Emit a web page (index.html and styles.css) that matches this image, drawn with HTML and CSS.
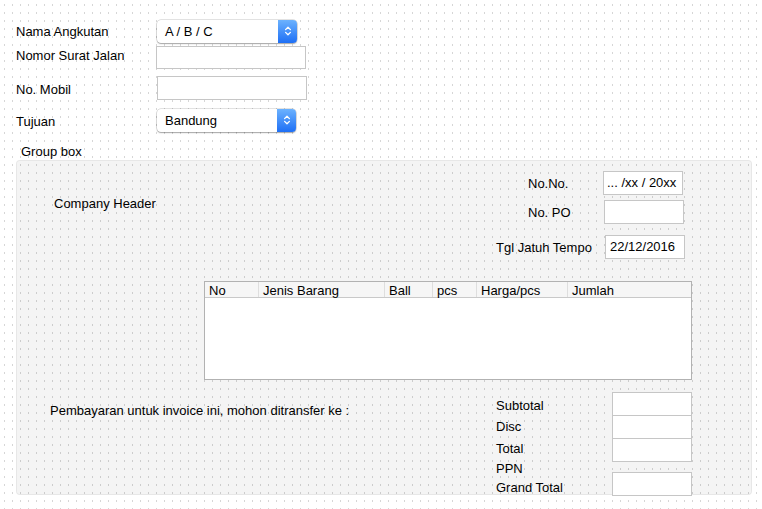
FILE: index.html
```html
<!DOCTYPE html>
<html>
<head>
<meta charset="utf-8">
<link rel="stylesheet" href="styles.css">
</head>
<body>
<div class="form">
  <div class="row r1">
    <span class="lbl">Nama Angkutan</span>
    <div class="combo c1">
      <span class="combo-text">A / B / C</span>
      <span class="combo-btn"><svg width="8" height="12" viewBox="0 0 8 12"><path d="M1.6 4.6 L4 2.2 L6.4 4.6 M1.6 7.4 L4 9.8 L6.4 7.4" fill="none" stroke="#fff" stroke-width="1.3" stroke-linecap="round" stroke-linejoin="round"/></svg></span>
    </div>
  </div>
  <div class="row r2">
    <span class="lbl">Nomor Surat Jalan</span>
    <div class="field f-long"></div>
  </div>
  <div class="row r3">
    <span class="lbl">No. Mobil</span>
    <div class="field f-long f-shift"></div>
  </div>
  <div class="row r4">
    <span class="lbl">Tujuan</span>
    <div class="combo c2">
      <span class="combo-text">Bandung</span>
      <span class="combo-btn"><svg width="8" height="12" viewBox="0 0 8 12"><path d="M1.6 4.6 L4 2.2 L6.4 4.6 M1.6 7.4 L4 9.8 L6.4 7.4" fill="none" stroke="#fff" stroke-width="1.3" stroke-linecap="round" stroke-linejoin="round"/></svg></span>
    </div>
  </div>
</div>

<div class="gb-title">Group box</div>
<div class="gb">
  <div class="gb-head">
    <div class="company">Company Header</div>
    <div class="meta">
      <div class="meta-row m1"><span class="meta-lbl">No.No.</span><div class="field f-short">... /xx / 20xx</div></div>
      <div class="meta-row m2"><span class="meta-lbl">No. PO</span><div class="field f-short"></div></div>
      <div class="meta-row m3"><span class="meta-lbl">Tgl Jatuh Tempo</span><div class="field f-short f-date">22/12/2016</div></div>
    </div>
  </div>

  <div class="table">
    <div class="thead">
      <div class="th w1">No</div>
      <div class="th w2">Jenis Barang</div>
      <div class="th w3">Ball</div>
      <div class="th w4">pcs</div>
      <div class="th w5">Harga/pcs</div>
      <div class="th w6">Jumlah</div>
    </div>
  </div>

  <div class="foot">
    <div class="pay">Pembayaran untuk invoice ini, mohon ditransfer ke :</div>
    <div class="sums">
      <div class="s1">Subtotal</div>
      <div class="s2">Disc</div>
      <div class="s3">Total</div>
      <div class="s4">PPN</div>
      <div class="s5">Grand Total</div>
    </div>
    <div class="sum-fields">
      <div class="field f-sum"></div>
      <div class="field f-sum f-join"></div>
      <div class="field f-sum f-join"></div>
      <div class="field f-sum f-grand"></div>
    </div>
  </div>
</div>
</body>
</html>
```

FILE: styles.css
```css
html, body {
  margin: 0;
  padding: 0;
}

body {
  width: 762px;
  height: 509px;
  overflow: hidden;
  font-family: "Liberation Sans", Arial, sans-serif;
  font-size: 13px;
  line-height: 15px;
  color: #000;
  background-color: #fff;
  background-image:
    linear-gradient(to bottom, #fff 0, #fff 4px, rgba(255,255,255,0) 4px, rgba(255,255,255,0) 6px, #fff 6px),
    linear-gradient(to right, rgba(214,214,214,0) 0, rgba(214,214,214,0) 4px, #d6d6d6 4px, #d6d6d6 5px, rgba(214,214,214,0) 5px);
  background-size: 8px 8px, 8px 8px;
}

.form {
  padding: 19px 0 0 16px;
}

.row {
  display: flex;
  align-items: center;
}

.lbl {
  width: 140px;
  flex: none;
}

.r1 { height: 24px; }
.r2 { height: 23px; margin-top: 3px; }
.r2 .lbl { padding-bottom: 4px; }
.r3 { height: 24px; margin-top: 7px; }
.r3 .lbl { padding-top: 2px; }
.r4 { height: 24px; margin-top: 8px; }
.r4 .lbl { padding-top: 3px; }

.field {
  box-sizing: border-box;
  background: #fff;
  border: 1px solid #c6c6c6;
  height: 24px;
  line-height: 22px;
  padding-left: 3px;
  white-space: nowrap;
  overflow: hidden;
}

.f-long {
  width: 150px;
}
.r2 .f-long { height: 23px; }
.f-shift { margin-left: 1px; }

.combo {
  display: flex;
  box-sizing: border-box;
  height: 23px;
  margin-left: 1px;
  background: #fff;
  border-radius: 4px;
  overflow: hidden;
  box-shadow: 0 0 0 0.5px rgba(0,0,0,0.22), 0 1px 1.5px rgba(0,0,0,0.28);
}
.c1 { width: 140px; }
.c2 { width: 139px; }

.combo-text {
  flex: 1;
  padding-left: 8px;
  line-height: 23px;
}

.combo-btn {
  width: 19px;
  flex: none;
  display: flex;
  align-items: center;
  justify-content: center;
  background: linear-gradient(#6cb2fe, #1e6ff5);
}

.gb-title {
  margin: 12px 0 0 21px;
}

.gb {
  box-sizing: border-box;
  width: 736px;
  height: 335px;
  margin: 1px 0 0 16px;
  border: 1px solid rgba(0,0,0,0.055);
  border-radius: 4px;
  background: rgba(0,0,0,0.043);
}

.gb-head {
  display: grid;
  grid-template-columns: 479px 1fr;
  margin-top: 10px;
}

.company {
  padding-left: 37px;
  margin-top: 25px;
}

.meta {
  display: flex;
  flex-direction: column;
}

.meta-row {
  display: flex;
  align-items: center;
  height: 24px;
}

.meta-lbl {
  box-sizing: border-box;
  flex: none;
}
.m1 .meta-lbl { width: 107px; padding-left: 32px; }
.m2 { margin-top: 5px; }
.m2 .meta-lbl { width: 108px; padding-left: 32px; }
.m3 { margin-top: 11px; }
.m3 .meta-lbl { width: 109px; }

.f-short {
  width: 80px;
}
.f-date { padding-left: 4px; }

.table {
  box-sizing: border-box;
  width: 488px;
  height: 99px;
  margin: 22px 0 0 187px;
  border: 1px solid #b2b2b2;
  background: #fff;
}

.thead {
  display: flex;
  box-sizing: border-box;
  height: 16px;
  background: #f6f6f6;
  border-bottom: 1px solid #c9c9c9;
}

.th {
  box-sizing: border-box;
  padding: 2px 0 0 4px;
  line-height: 13px;
  white-space: nowrap;
  flex: none;
}
.th + .th {
  border-left: 1px solid #dedede;
}
.w1 { width: 53px; }
.w2 { width: 126px; }
.w3 { width: 48px; }
.w4 { width: 44px; }
.w5 { width: 91px; }
.w6 { flex: 1; }

.foot {
  display: grid;
  grid-template-columns: 479px 116px 80px;
  margin-top: 12px;
}

.pay {
  padding: 11px 0 0 33px;
}

.sums {
  display: flex;
  flex-direction: column;
}
.s1 { margin-top: 6px; }
.s2 { margin-top: 6px; }
.s3 { margin-top: 7px; }
.s4 { margin-top: 5px; }
.s5 { margin-top: 4px; }

.sum-fields {
  display: flex;
  flex-direction: column;
}
.f-sum { width: 80px; }
.f-join { margin-top: -1px; }
.f-grand { margin-top: 10px; }
```
